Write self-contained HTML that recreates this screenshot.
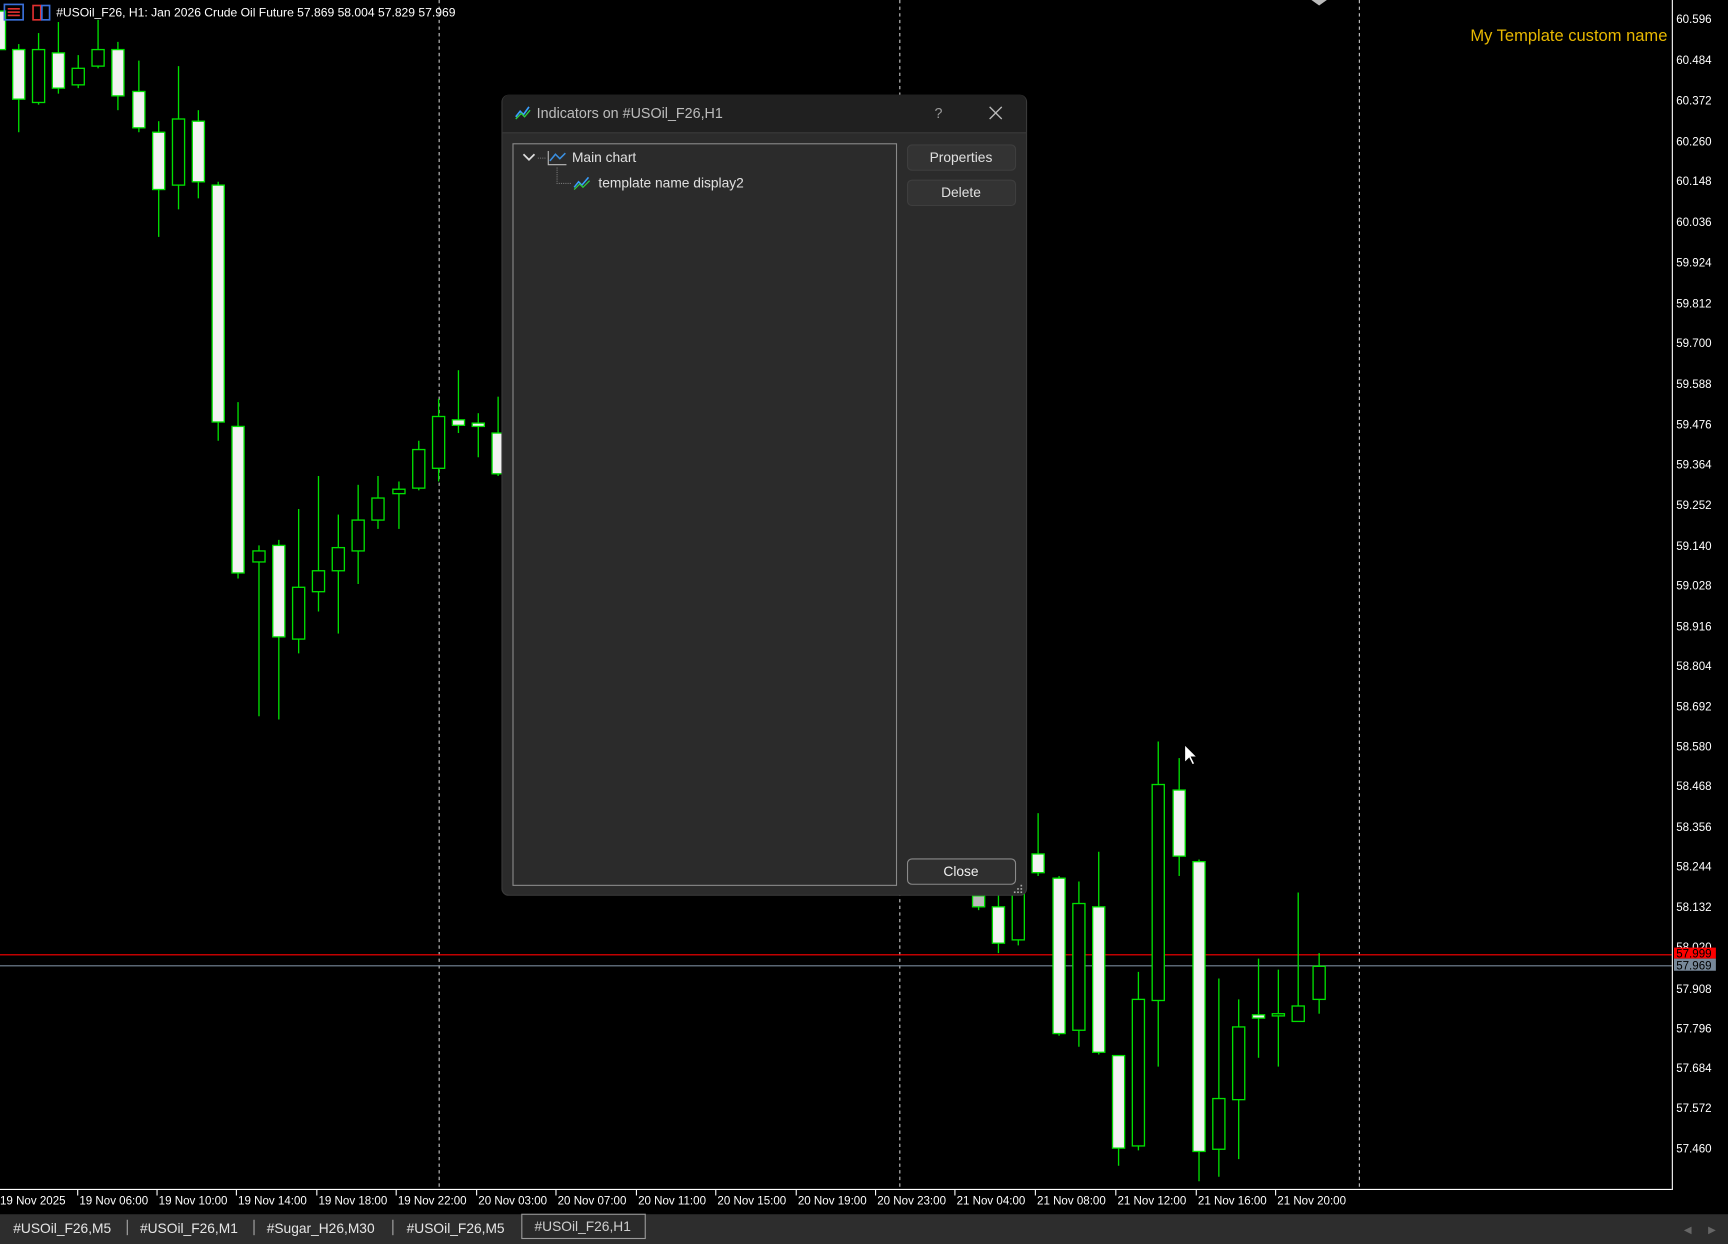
<!DOCTYPE html>
<html><head><meta charset="utf-8"><style>
html,body{margin:0;padding:0;background:#000;width:1728px;height:1244px;overflow:hidden}
svg{display:block}
text{font-family:"Liberation Sans",sans-serif}
</style></head><body>
<svg width="1728" height="1244" viewBox="0 0 1568 1129" preserveAspectRatio="none" xmlns="http://www.w3.org/2000/svg">
<rect width="1568" height="1129" fill="#000"/>
<g stroke="#c8c8c8" stroke-width="1" stroke-dasharray="3,3">
<line x1="398.5" y1="0" x2="398.5" y2="1079"/><line x1="816.5" y1="0" x2="816.5" y2="1079"/><line x1="1233.5" y1="0" x2="1233.5" y2="1079"/>
</g>
<line x1="0" y1="866.5" x2="1517" y2="866.5" stroke="#ff0000"/>
<line x1="0" y1="876.5" x2="1517" y2="876.5" stroke="#778899"/>
<g stroke="#00e000" stroke-width="1.2">
<g>
<line x1="17" y1="40" x2="17" y2="120"/><line x1="35" y1="30" x2="35" y2="95"/><line x1="53" y1="20" x2="53" y2="85"/><line x1="71" y1="50" x2="71" y2="80"/><line x1="89" y1="18" x2="89" y2="62"/><line x1="107" y1="38" x2="107" y2="100"/><line x1="126" y1="55" x2="126" y2="120"/><line x1="144" y1="110" x2="144" y2="215"/><line x1="162" y1="60" x2="162" y2="190"/><line x1="180" y1="100" x2="180" y2="180"/><line x1="198" y1="165" x2="198" y2="400"/><line x1="216" y1="365" x2="216" y2="525"/><line x1="235" y1="495" x2="235" y2="650"/><line x1="253" y1="490" x2="253" y2="653"/><line x1="271" y1="462" x2="271" y2="593"/><line x1="289" y1="432" x2="289" y2="555"/><line x1="307" y1="467" x2="307" y2="575"/><line x1="325" y1="440" x2="325" y2="530"/><line x1="343" y1="432" x2="343" y2="480"/><line x1="362" y1="437" x2="362" y2="480"/><line x1="380" y1="400" x2="380" y2="445"/><line x1="398" y1="362" x2="398" y2="437"/><line x1="416" y1="336" x2="416" y2="393"/><line x1="434" y1="375" x2="434" y2="415"/><line x1="452" y1="360" x2="452" y2="432"/>
<line x1="888" y1="810" x2="888" y2="826"/><line x1="906" y1="812" x2="906" y2="865"/><line x1="924" y1="805" x2="924" y2="858"/><line x1="942" y1="738" x2="942" y2="795"/><line x1="961" y1="795" x2="961" y2="940"/><line x1="979" y1="800" x2="979" y2="950"/><line x1="997" y1="773" x2="997" y2="957"/><line x1="1015" y1="958" x2="1015" y2="1058"/><line x1="1033" y1="882" x2="1033" y2="1044"/><line x1="1051" y1="673" x2="1051" y2="968"/><line x1="1070" y1="688" x2="1070" y2="795"/><line x1="1088" y1="780" x2="1088" y2="1072"/><line x1="1106" y1="888" x2="1106" y2="1068"/><line x1="1124" y1="907" x2="1124" y2="1052"/><line x1="1142" y1="870" x2="1142" y2="960"/><line x1="1160" y1="880" x2="1160" y2="968"/><line x1="1178" y1="810" x2="1178" y2="925"/><line x1="1197" y1="865" x2="1197" y2="920"/>
</g>
<g fill="#f2f2f2">
<rect x="-6" y="10" width="11" height="35"/><rect x="11.5" y="45" width="11" height="45"/><rect x="47.5" y="48" width="11" height="32"/><rect x="101.5" y="45" width="11" height="42"/><rect x="120.5" y="83" width="11" height="33"/><rect x="138.5" y="120" width="11" height="52"/><rect x="174.5" y="110" width="11" height="55"/><rect x="192.5" y="168" width="11" height="215"/><rect x="210.5" y="387" width="11" height="133"/><rect x="247.5" y="495" width="11" height="83"/><rect x="410.5" y="381" width="11" height="5"/><rect x="428.5" y="384" width="11" height="3"/><rect x="446.5" y="393" width="11" height="37"/>
<rect x="882.5" y="813" width="11" height="10" fill="#bbb"/><rect x="900.5" y="823" width="11" height="33"/><rect x="936.5" y="775" width="11" height="17"/><rect x="955.5" y="797" width="11" height="141"/><rect x="991.5" y="823" width="11" height="132"/><rect x="1009.5" y="958" width="11" height="84"/><rect x="1064.5" y="717" width="11" height="60"/><rect x="1082.5" y="782" width="11" height="263"/><rect x="1136.5" y="921" width="11" height="3"/>
</g>
<g fill="#000">
<rect x="29.5" y="45" width="11" height="48"/><rect x="65.5" y="62" width="11" height="15"/><rect x="83.5" y="45" width="11" height="15"/><rect x="156.5" y="108" width="11" height="60"/><rect x="229.5" y="500" width="11" height="10"/><rect x="265.5" y="533" width="11" height="47"/><rect x="283.5" y="518" width="11" height="19"/><rect x="301.5" y="497" width="11" height="21"/><rect x="319.5" y="472" width="11" height="28"/><rect x="337.5" y="452" width="11" height="20"/><rect x="356.5" y="444" width="11" height="4"/><rect x="374.5" y="408" width="11" height="35"/><rect x="392.5" y="378" width="11" height="47"/>
<rect x="918.5" y="810" width="11" height="43"/><rect x="973.5" y="820" width="11" height="115"/><rect x="1027.5" y="907" width="11" height="133"/><rect x="1045.5" y="712" width="11" height="196"/><rect x="1100.5" y="997" width="11" height="46"/><rect x="1118.5" y="932" width="11" height="66"/><rect x="1154.5" y="920" width="11" height="2"/><rect x="1172.5" y="913" width="11" height="14"/><rect x="1191.5" y="877" width="11" height="30"/>
</g>
</g>
<rect x="4" y="4" width="17" height="14" fill="none" stroke="#3a6fd8" stroke-width="1.5"/>
<g stroke="#e03030" stroke-width="1.5"><line x1="7" y1="8" x2="18" y2="8"/><line x1="7" y1="11" x2="18" y2="11"/><line x1="7" y1="14" x2="18" y2="14"/></g>
<rect x="30" y="5" width="7" height="13" fill="none" stroke="#e03030" stroke-width="1.5"/><rect x="38" y="5" width="7" height="13" fill="none" stroke="#3a6fd8" stroke-width="1.5"/>
<text x="51" y="15" font-size="11" fill="#fff">#USOil_F26, H1:  Jan 2026 Crude Oil Future  57.869 58.004 57.829 57.969</text>
<text x="1513" y="37" font-size="15" fill="#e8b800" text-anchor="end">My Template custom name</text>
<path d="M1190 0 L1197 5 L1204 0 Z" fill="#bbb"/>
<line x1="1517.5" y1="0" x2="1517.5" y2="1080" stroke="#fff"/>
<g font-size="10.5" fill="#fff" stroke="none">
<text x="1521" y="21">60.596</text><text x="1521" y="58">60.484</text><text x="1521" y="95">60.372</text><text x="1521" y="132">60.260</text><text x="1521" y="168">60.148</text><text x="1521" y="205">60.036</text><text x="1521" y="242">59.924</text><text x="1521" y="279">59.812</text><text x="1521" y="315">59.700</text><text x="1521" y="352">59.588</text><text x="1521" y="389">59.476</text><text x="1521" y="425">59.364</text><text x="1521" y="462">59.252</text><text x="1521" y="499">59.140</text><text x="1521" y="535">59.028</text><text x="1521" y="572">58.916</text><text x="1521" y="608">58.804</text><text x="1521" y="645">58.692</text><text x="1521" y="681">58.580</text><text x="1521" y="717">58.468</text><text x="1521" y="754">58.356</text><text x="1521" y="790">58.244</text><text x="1521" y="827">58.132</text><text x="1521" y="863">58.020</text><text x="1521" y="901">57.908</text><text x="1521" y="937">57.796</text><text x="1521" y="973">57.684</text><text x="1521" y="1009">57.572</text><text x="1521" y="1046">57.460</text>
</g>
<rect x="1519" y="860" width="38" height="10" fill="#ff0000"/><text x="1521" y="869" font-size="10.5" fill="#000">57.999</text>
<rect x="1519" y="870" width="38" height="11" fill="#778899"/><text x="1521" y="880" font-size="10.5" fill="#000">57.969</text>
<line x1="0" y1="1079.5" x2="1517" y2="1079.5" stroke="#fff"/>
<g stroke="#fff"><line x1="70.5" y1="1080" x2="70.5" y2="1085"/><line x1="142.5" y1="1080" x2="142.5" y2="1085"/><line x1="214.5" y1="1080" x2="214.5" y2="1085"/><line x1="287.5" y1="1080" x2="287.5" y2="1085"/><line x1="359.5" y1="1080" x2="359.5" y2="1085"/><line x1="432.5" y1="1080" x2="432.5" y2="1085"/><line x1="504.5" y1="1080" x2="504.5" y2="1085"/><line x1="577.5" y1="1080" x2="577.5" y2="1085"/><line x1="649.5" y1="1080" x2="649.5" y2="1085"/><line x1="722.5" y1="1080" x2="722.5" y2="1085"/><line x1="794.5" y1="1080" x2="794.5" y2="1085"/><line x1="866.5" y1="1080" x2="866.5" y2="1085"/><line x1="939.5" y1="1080" x2="939.5" y2="1085"/><line x1="1012.5" y1="1080" x2="1012.5" y2="1085"/><line x1="1085.5" y1="1080" x2="1085.5" y2="1085"/><line x1="1157.5" y1="1080" x2="1157.5" y2="1085"/></g>
<g font-size="10.5" fill="#fff">
<text x="0" y="1093">19 Nov 2025</text><text x="72" y="1093">19 Nov 06:00</text><text x="144" y="1093">19 Nov 10:00</text><text x="216" y="1093">19 Nov 14:00</text><text x="289" y="1093">19 Nov 18:00</text><text x="361" y="1093">19 Nov 22:00</text><text x="434" y="1093">20 Nov 03:00</text><text x="506" y="1093">20 Nov 07:00</text><text x="579" y="1093">20 Nov 11:00</text><text x="651" y="1093">20 Nov 15:00</text><text x="724" y="1093">20 Nov 19:00</text><text x="796" y="1093">20 Nov 23:00</text><text x="868" y="1093">21 Nov 04:00</text><text x="941" y="1093">21 Nov 08:00</text><text x="1014" y="1093">21 Nov 12:00</text><text x="1087" y="1093">21 Nov 16:00</text><text x="1159" y="1093">21 Nov 20:00</text>
</g>
<rect x="0" y="1102" width="1568" height="27" fill="#2d2d2d"/>
<rect x="473.5" y="1102" width="112" height="22" fill="#2a2a2a" stroke="#9a9a9a"/>
<g stroke="#aaa"><line x1="115.5" y1="1107" x2="115.5" y2="1121"/><line x1="230.5" y1="1107" x2="230.5" y2="1121"/><line x1="356.5" y1="1107" x2="356.5" y2="1121"/></g>
<g font-size="12.5" fill="#e6e6e6">
<text x="12" y="1119">#USOil_F26,M5</text><text x="127" y="1119">#USOil_F26,M1</text><text x="242" y="1119">#Sugar_H26,M30</text><text x="369" y="1119">#USOil_F26,M5</text><text x="485" y="1117" fill="#cfcfcf">#USOil_F26,H1</text>
</g>
<text x="1528" y="1119" font-size="9" fill="#666">◀</text><text x="1550" y="1119" font-size="9" fill="#666">▶</text>
<rect x="455.5" y="86.5" width="476" height="726" rx="6" fill="#2b2b2b" stroke="#3a3a3a"/>
<path d="M456 120 V92 a6 6 0 0 1 6 -6 H925 a6 6 0 0 1 6 6 V120 Z" fill="#202020"/>
<line x1="456" y1="120.5" x2="931" y2="120.5" stroke="#3a3a3a"/>
<path d="M468 106 L472 101 L475 104 L480 97" stroke="#3aa0ff" stroke-width="1.5" fill="none"/><path d="M468 108 L473 103 L476 106 L481 100" stroke="#2ecc40" stroke-width="1.2" fill="none"/>
<text x="487" y="107" font-size="13" fill="#bdbdbd">Indicators on #USOil_F26,H1</text>
<text x="848" y="107" font-size="13" fill="#999">?</text>
<path d="M898 97 L909 108 M909 97 L898 108" stroke="#bbb" stroke-width="1.2"/>
<rect x="465.5" y="130.5" width="348" height="673" fill="#2b2b2b" stroke="#8a8a8a"/>
<path d="M475 140 L480 145 L485 140" stroke="#ddd" stroke-width="1.6" fill="none"/>
<line x1="488" y1="143.5" x2="495" y2="143.5" stroke="#777" stroke-dasharray="1,1"/>
<path d="M497.5 137 V149.5 H514" stroke="#bbb" fill="none"/><path d="M499 146 L504 140 L508 144 L513 139" stroke="#3a8fe0" stroke-width="1.4" fill="none"/>
<text x="519" y="147" font-size="12.5" fill="#e0e0e0">Main chart</text>
<path d="M505.5 152 V166.5 H519" stroke="#777" stroke-dasharray="1,1" fill="none"/>
<path d="M521 170 L525 165 L528 168 L534 161" stroke="#3aa0ff" stroke-width="1.4" fill="none"/><path d="M521 172 L526 167 L529 170 L535 164" stroke="#2ecc40" stroke-width="1.1" fill="none"/>
<text x="543" y="170" font-size="12.5" fill="#e0e0e0">template name display2</text>
<rect x="823.5" y="131.5" width="98" height="23" rx="4" fill="#333" stroke="#3e3e3e"/><text x="872" y="147" font-size="12.5" fill="#e0e0e0" text-anchor="middle">Properties</text>
<rect x="823.5" y="163.5" width="98" height="23" rx="4" fill="#333" stroke="#3e3e3e"/><text x="872" y="179" font-size="12.5" fill="#e0e0e0" text-anchor="middle">Delete</text>
<rect x="823.5" y="779.5" width="98" height="23" rx="4" fill="#2f2f2f" stroke="#8a8a8a"/><text x="872" y="795" font-size="12.5" fill="#f0f0f0" text-anchor="middle">Close</text>
<g fill="#aaa"><rect x="926" y="803" width="1.5" height="1.5"/><rect x="923" y="806" width="1.5" height="1.5"/><rect x="926" y="806" width="1.5" height="1.5"/><rect x="920" y="809" width="1.5" height="1.5"/><rect x="923" y="809" width="1.5" height="1.5"/><rect x="926" y="809" width="1.5" height="1.5"/></g>
<path d="M1075 676 V692 L1079 688 L1082 694 L1084 693 L1081 687 L1086 687 Z" fill="#fff" stroke="#000" stroke-width="0.8"/>
</svg>
</body></html>
